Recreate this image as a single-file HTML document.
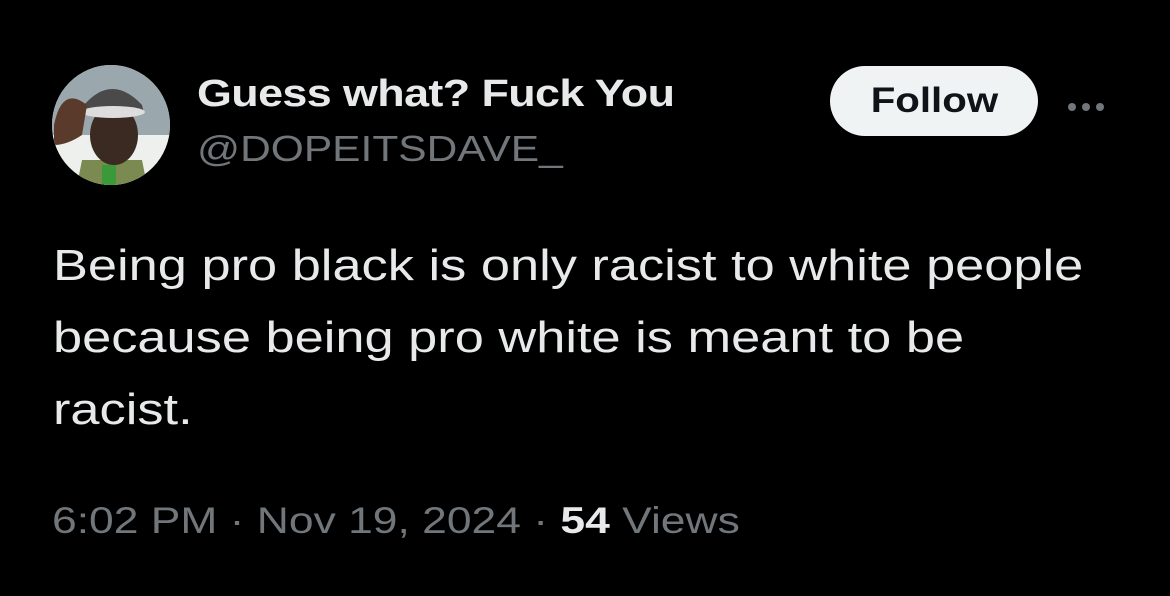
<!DOCTYPE html>
<html><head><meta charset="utf-8"><style>
body{margin:0;width:1170px;height:596px;background:#000;overflow:hidden;font-family:"Liberation Sans",Arial,sans-serif;position:relative}
.av{position:absolute;left:52px;top:65px;width:118px;height:120px;border-radius:50%;overflow:hidden;background:#d9d9d9}
.s{transform-origin:0 0;white-space:nowrap}
.name{position:absolute;left:197px;top:73px;color:#e7e9ea;font-weight:bold;font-size:38px;letter-spacing:-0.5px;transform:scaleX(1.18)}
.handle{position:absolute;left:197px;top:128px;color:#71767b;font-size:36px;transform:scaleX(1.18)}
.follow{position:absolute;left:830px;top:66px;width:208px;height:70px;border-radius:35px;background:#eff3f4;color:#0f1419;font-weight:bold;font-size:35px;text-align:center;line-height:70px}
.follow span{display:inline-block;transform:scaleX(1.15)}
.dots{position:absolute;left:1068px;top:98px}
.dots i{display:inline-block;width:8px;height:8px;border-radius:50%;background:#71767b;margin-right:6px}
.body{position:absolute;left:53px;top:230px;color:#e7e9ea;font-size:44px;line-height:72px;transform:scaleX(1.19)}
.ts{position:absolute;left:52px;top:500px;color:#71767b;font-size:37px;transform:scaleX(1.2)}
.ts b{color:#e7e9ea}
</style></head><body>
<div class="av"><svg width="118" height="120" viewBox="0 0 118 120">
<rect width="118" height="120" fill="#9aa8ad"/>
<rect x="0" y="70" width="118" height="50" fill="#eef0ee"/>
<path d="M30 95 L90 95 L95 120 L25 120Z" fill="#7a8a50"/>
<rect x="50" y="100" width="14" height="20" fill="#3a9a3a"/>
<ellipse cx="62" cy="70" rx="24" ry="30" fill="#3a2a22"/>
<path d="M32 40 Q60 8 90 40 L92 48 L30 48Z" fill="#4a4a4a"/>
<ellipse cx="61" cy="47" rx="32" ry="6" fill="#ddd"/>
<path d="M2 60 Q10 20 35 40 L30 70 Q15 80 2 80Z" fill="#5a3a2a"/>
</svg></div>
<div class="name s">Guess what? Fuck You</div>
<div class="handle s">@DOPEITSDAVE_</div>
<div class="follow"><span>Follow</span></div>
<div class="dots"><i></i><i></i><i></i></div>
<div class="body s">Being pro black is only racist to white people<br>because being pro white is meant to be<br>racist.</div>
<div class="ts s">6:02 PM · Nov 19, 2024 · <b>54</b> Views</div>
</body></html>
